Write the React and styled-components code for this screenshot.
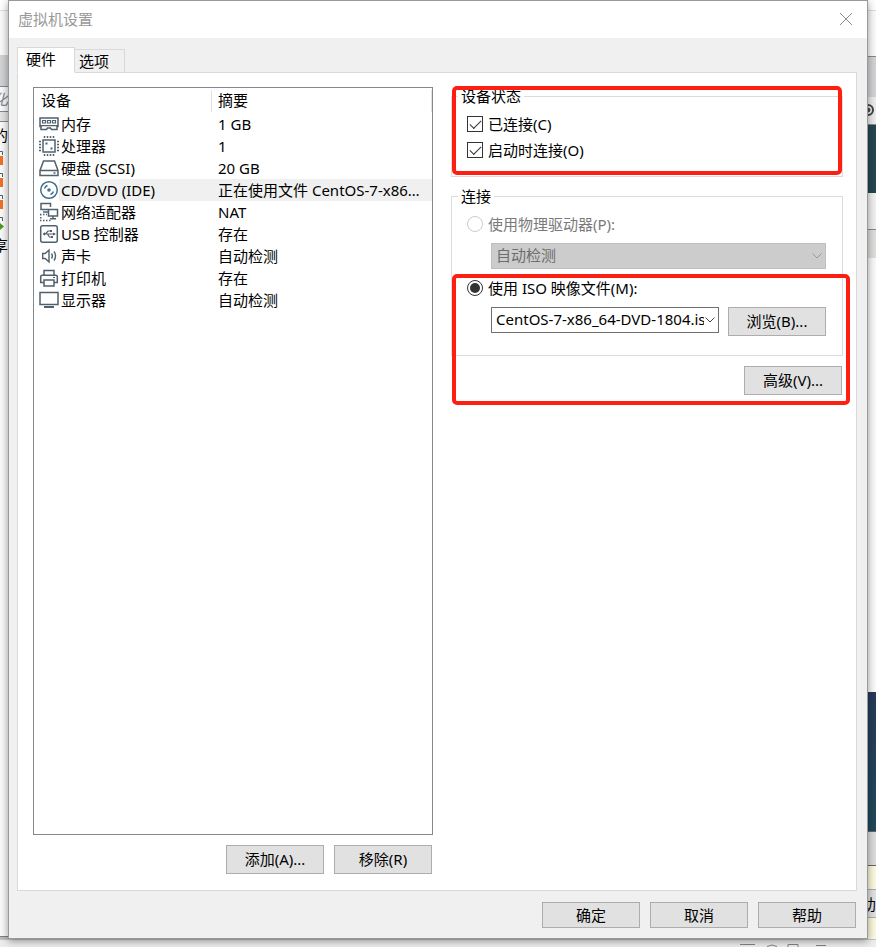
import React, { useState } from "react";
import styled, { createGlobalStyle } from "styled-components";

const GlobalStyle = createGlobalStyle`
  * {
    box-sizing: border-box;
  }

  body {
    margin: 0;
    background: #f0f0f0;
  }

  body,
  button,
  select,
  table {
    font-family: "Noto Sans", "Noto Sans CJK SC", sans-serif;
    font-size: 15px;
    font-weight: 400;
    color: #000;
  }
`;

/* desktop behind the dialog */

const Desktop = styled.div`
  display: grid;
  grid-template-columns: 8px minmax(0, 1fr) 8px;
  grid-template-rows: minmax(0, 1fr) 8px;
  height: 100vh;
  min-height: 560px;
  overflow: hidden;
`;

const Strip = styled.div`
  display: flex;
  flex-direction: column;
  min-height: 0;
  overflow: hidden;
`;

const Block = styled.div`
  display: flex;
  align-items: center;
  justify-content: ${({ $end }) => ($end ? "flex-end" : "flex-start")};
  flex: ${({ $h }) => ($h ? `0 0 ${$h}px` : "1 1 0")};
  overflow: hidden;
  white-space: nowrap;
  line-height: 20px;
  background: ${({ $bg }) => $bg || "#fafafa"};
  border-top: ${({ $line }) => ($line ? `1px solid ${$line}` : "none")};
  color: ${({ $color }) => $color || "#000"};
  font-style: ${({ $italic }) => ($italic ? "italic" : "normal")};
`;

const StatusStrip = styled.div`
  grid-column: 1 / -1;
  display: flex;
  justify-content: flex-end;
  align-items: flex-end;
  padding-right: 48px;
  background: #ededed;
  border-top: 1px solid #c4c4c4;
`;

/* dialog */

const Dialog = styled.main`
  display: flex;
  flex-direction: column;
  position: relative;
  min-height: 0;
  border: 1px solid #999;
  background: #f0f0f0;
  box-shadow: 0 2px 8px rgba(0, 0, 0, 0.4);
`;

const TitleBar = styled.header`
  display: flex;
  align-items: center;
  justify-content: space-between;
  flex: 0 0 37px;
  padding: 0 14px 2px 9px;
  background: #fff;
  color: #999;
`;

const Title = styled.h1`
  margin: 0;
  font-size: 15px;
  font-weight: 400;
`;

const CloseButton = styled.button`
  display: flex;
  padding: 0;
  border: 0;
  background: none;
`;

const Body = styled.div`
  display: flex;
  flex-direction: column;
  flex: 1;
  min-height: 0;
  padding: 9px 10px 0 8px;
`;

const Tabs = styled.div`
  display: flex;
  align-items: flex-end;
`;

const Tab = styled.button`
  position: relative;
  z-index: ${({ $active }) => ($active ? 1 : 0)};
  height: ${({ $active }) => ($active ? 26 : 24)}px;
  margin-bottom: -1px;
  padding: ${({ $active }) => ($active ? "0 18px 2px 8px" : "0 15px 0 4px")};
  border: 1px solid #d9d9d9;
  border-left-width: ${({ $active }) => ($active ? 1 : 0)}px;
  border-bottom-color: ${({ $active }) => ($active ? "#fff" : "#d9d9d9")};
  background: ${({ $active }) => ($active ? "#fff" : "#f0f0f0")};
  line-height: 20px;
`;

const Panel = styled.section`
  display: flex;
  gap: 18px;
  flex: 1;
  min-height: 0;
  padding: 14px 13px 16px 15px;
  border: 1px solid #d9d9d9;
  background: #fff;
`;

const Devices = styled.div`
  display: flex;
  flex-direction: column;
  gap: 10px;
  flex: 0 0 400px;
`;

const DeviceList = styled.div`
  flex: 1;
  min-height: 0;
  overflow: hidden;
  border: 1px solid #828790;
`;

const DeviceTable = styled.table`
  width: 100%;
  table-layout: fixed;
  border-collapse: collapse;
`;

const HeadCell = styled.th`
  height: 25px;
  padding: 0 0 2px ${({ $pad }) => $pad}px;
  background: linear-gradient(#e2e2e2, #e2e2e2) right 2px / 1px 22px no-repeat;
  font-weight: 400;
  text-align: left;
  line-height: 20px;
`;

const Cell = styled.td`
  height: 22px;
  padding: 0 ${({ $end }) => $end || 0}px 0 ${({ $pad }) => $pad}px;
  overflow: hidden;
  text-overflow: ellipsis;
  white-space: nowrap;
  line-height: 22px;
  background: ${({ $selected }) => ($selected ? "#f0f0f0" : "transparent")};
`;

const Icon = styled.svg.attrs({ width: 20, height: 20, viewBox: "0 0 20 20", "aria-hidden": true })`
  display: block;
  fill: none;
  stroke: ${({ $color }) => $color || "#50616d"};
  stroke-width: 1.5;
`;

const ButtonRow = styled.div`
  display: flex;
  justify-content: flex-end;
  gap: 10px;
  padding-right: 1px;
`;

const PushButton = styled.button`
  flex: 0 0 98px;
  height: ${({ $short }) => ($short ? 26 : 29)}px;
  padding: 0 0 ${({ $short }) => ($short ? 0 : 2)}px;
  border: 1px solid #adadad;
  background: #e1e1e1;
  line-height: 20px;

  &:hover {
    border-color: #0078d7;
    background: #e5f1fb;
  }
`;

const Footer = styled.footer`
  display: flex;
  justify-content: flex-end;
  gap: 10px;
  padding: 11px 11px 10px;
`;

/* right column */

const Settings = styled.div`
  position: relative;
  flex: 1;
  min-width: 0;
`;

const Group = styled.fieldset`
  min-width: 0;
  margin: 0 0 10px;
  padding: 6px 15px 13px;
  border: 1px solid #dcdcdc;
`;

const Legend = styled.legend`
  height: 18px;
  margin-left: -9px;
  padding: 0 3px;
  line-height: 18px;
`;

const Option = styled.label`
  display: flex;
  align-items: center;
  gap: 5px;
  height: 26px;
  line-height: 20px;
  color: ${({ $disabled }) => ($disabled ? "#7a7a7a" : "#000")};
`;

const OptionText = styled.span`
  padding-bottom: 1px;
`;

const Check = styled.input.attrs({ type: "checkbox" })`
  appearance: none;
  display: grid;
  place-items: center;
  width: 16px;
  height: 16px;
  margin: 0;
  border: 1px solid #333;
  background: #fff;

  &:checked::before {
    content: "";
    width: 10px;
    height: 5px;
    margin-top: -3px;
    border: solid #333;
    border-width: 0 0 1px 1px;
    transform: rotate(-45deg);
  }
`;

const Radio = styled.input.attrs({ type: "radio" })`
  appearance: none;
  display: grid;
  place-items: center;
  width: 16px;
  height: 16px;
  margin: 0;
  border: 1px solid #333;
  border-radius: 50%;
  background: #fff;

  &:disabled {
    border-color: #ccc;
  }

  &:checked::before {
    content: "";
    width: 10px;
    height: 10px;
    border-radius: 50%;
    background: #333;
  }
`;

const Row = styled.div`
  display: flex;
  align-items: flex-end;
  gap: 9px;
  margin: 6px 1px 6px 24px;
`;

const Field = styled.div`
  display: grid;
  align-items: center;
  flex: 1;
  min-width: 0;
  align-self: flex-start;

  > * {
    grid-area: 1 / 1;
  }
`;

const Combo = styled.select`
  appearance: none;
  width: 100%;
  min-width: 0;
  height: 26px;
  padding: 0 14px 2px 4px;
  border: 1px solid #707070;
  border-radius: 0;
  background: #fff;
  line-height: 20px;

  &:disabled {
    border-color: #bfbfbf;
    background: #ccc;
    color: #6d6d6d;
    opacity: 1;
  }
`;

const Chevron = styled.svg.attrs({ width: 10, height: 6, viewBox: "0 0 10 6", "aria-hidden": true })`
  justify-self: end;
  margin-right: 4px;
  fill: none;
  stroke: ${({ $muted }) => ($muted ? "#999" : "#444")};
  pointer-events: none;
`;

const Highlight = styled.div`
  position: absolute;
  top: ${({ $top }) => $top}px;
  left: 1px;
  right: ${({ $right }) => $right}px;
  height: ${({ $height }) => $height}px;
  border: 4px solid #ff1f12;
  border-radius: 5px;
  pointer-events: none;
`;

const MemoryIcon = () => (
  <Icon>
    <path d="M1 4h18v8.500h-1v3h-5.500l-1-1.500h-3l-1 1.500H2v-3H1z" />
    <path d="M3.500 6.500h3v2.500h-3zM8.500 6.500h3v2.500h-3zM13.500 6.500h3v2.500h-3zM1 11.700h18" strokeWidth="1.200" />
  </Icon>
);

const CpuIcon = () => (
  <Icon>
    <path d="M4 4h12v12H4z" />
    <path
      d="M5.500 0v2M8.500 0v2M11.500 0v2M14.500 0v2M5.500 18v2M8.500 18v2M11.500 18v2M14.500 18v2M0 5.500h2M0 8.500h2M0 11.500h2M0 14.500h2M18 5.500h2M18 8.500h2M18 11.500h2M18 14.500h2"
      strokeWidth="1.500"
    />
    <path d="M6.500 7.500h2M11.500 12.500h2" strokeWidth="2" />
  </Icon>
);

const DiskIcon = () => (
  <Icon>
    <path d="M4.500 3h11L19 12.500v5H1v-5zM1 12.500h18" />
    <path d="M14.500 15h2" />
  </Icon>
);

const DiscIcon = () => (
  <Icon $color="#41708f">
    <circle cx="10" cy="10" r="8.300" />
    <circle cx="10" cy="10" r="1.800" fill="#41708f" stroke="none" />
    <path d="M5.500 8.500a5 5 0 0 1 3-3M14.500 11.500a5 5 0 0 1-3 3" />
  </Icon>
);

const NetworkIcon = () => (
  <Icon>
    <path d="M9 7.500H2v-6h9.500V5M4 10h5" />
    <path d="M9.500 7.500h9V14h-9zM14 14v2.500M11 16.800h6" />
    <path d="M1 12.500h7M1 18.500h11M1.700 12v7" strokeDasharray="1.500 1.500" />
  </Icon>
);

const UsbIcon = () => (
  <Icon>
    <rect x="1.700" y="1.700" width="16.600" height="16.600" rx="2" />
    <path d="M4.500 10h11M6.500 10 9 7h2.500M8.500 10l2 3H13" strokeWidth="1.200" />
    <path d="M3.500 10l2.500-1.700v3.400zM14 8.500l3 1.500-3 1.500zM11 6h2v2h-2zM12 12h2v2h-2z" fill="#50616d" stroke="none" />
  </Icon>
);

const SoundIcon = () => (
  <Icon>
    <path d="M3.700 7.500h2.500L10 4v12l-3.800-3.500H3.700zM12.500 7.500c1 1.500 1 3.500 0 5M15 5.500c2 2.500 2 6.500 0 9" strokeWidth="1.400" />
  </Icon>
);

const PrinterIcon = () => (
  <Icon>
    <path d="M5 7V2.500h10V7M5 14.500H1.700V8.700q0-1.500 1.500-1.500h13.600q1.500 0 1.500 1.500v5.800H15M5 12h10v6H5z" />
    <path d="M14 9.500h2" strokeWidth="1.200" />
  </Icon>
);

const DisplayIcon = () => (
  <Icon>
    <path d="M1 2.500h18v12H1z" />
    <path d="M5 17h10" strokeWidth="2" />
  </Icon>
);

const devices = [
  { icon: MemoryIcon, name: "内存", summary: "1 GB" },
  { icon: CpuIcon, name: "处理器", summary: "1" },
  { icon: DiskIcon, name: "硬盘 (SCSI)", summary: "20 GB" },
  { icon: DiscIcon, name: "CD/DVD (IDE)", summary: "正在使用文件 CentOS-7-x86_64-DVD-1804.iso" },
  { icon: NetworkIcon, name: "网络适配器", summary: "NAT" },
  { icon: UsbIcon, name: "USB 控制器", summary: "存在" },
  { icon: SoundIcon, name: "声卡", summary: "自动检测" },
  { icon: PrinterIcon, name: "打印机", summary: "存在" },
  { icon: DisplayIcon, name: "显示器", summary: "自动检测" },
];

const VmIcon = ({ running }) => (
  <svg width="4" height="15" viewBox="0 0 4 15" aria-hidden="true">
    <path d="M0 .5h2.500V4" fill="none" stroke="#50616d" />
    {running ? <path d="M0 6l4 3.500L0 13z" fill="#4c9a1c" /> : <path d="M0 5h3v9H0z" fill="#f0702a" />}
  </svg>
);

const App = () => {
  const [selected, setSelected] = useState(3);

  return (
    <>
      <GlobalStyle />
      <Desktop>
        <Strip aria-hidden="true">
          <Block $h={10} $bg="#fff" />
          <Block $h={45} $line="#ddd" />
          <Block $h={31} $bg="#d2d3d5" />
          <Block $h={25} $line="#888" $color="#7d8b96" $end $italic>化</Block>
          <Block $h={10} $line="#888" $bg="#e4e4e4" />
          <Block $h={26} $line="#888" $end>的</Block>
          <Block $h={22}><VmIcon /></Block>
          <Block $h={22}><VmIcon /></Block>
          <Block $h={22}><VmIcon /></Block>
          <Block $h={22}><VmIcon running /></Block>
          <Block $h={20} $end>享</Block>
          <Block />
          <Block $h={3} $line="#7b8288" $bg="#bbb" />
        </Strip>

        <Dialog>
          <TitleBar>
            <Title>虚拟机设置</Title>
            <CloseButton aria-label="关闭">
              <svg width="14" height="14" viewBox="0 0 14 14" fill="none" stroke="#8c8c8c">
                <path d="M1 1l12 12M13 1L1 13" />
              </svg>
            </CloseButton>
          </TitleBar>

          <Body>
            <Tabs role="tablist">
              <Tab role="tab" aria-selected="true" $active>硬件</Tab>
              <Tab role="tab" aria-selected="false">选项</Tab>
            </Tabs>

            <Panel>
              <Devices>
                <DeviceList>
                  <DeviceTable>
                    <colgroup>
                      <col style={{ width: 25 }} />
                      <col style={{ width: 153 }} />
                      <col />
                    </colgroup>
                    <thead>
                      <tr>
                        <HeadCell colSpan={2} $pad={7}>设备</HeadCell>
                        <HeadCell $pad={6}>摘要</HeadCell>
                      </tr>
                    </thead>
                    <tbody>
                      {devices.map(({ icon: DeviceIcon, name, summary }, index) => (
                        <tr key={name} onClick={() => setSelected(index)}>
                          <Cell $pad={5}><DeviceIcon /></Cell>
                          <Cell $pad={2} $selected={index === selected}>{name}</Cell>
                          <Cell $pad={6} $end={10} $selected={index === selected}>{summary}</Cell>
                        </tr>
                      ))}
                    </tbody>
                  </DeviceTable>
                </DeviceList>
                <ButtonRow>
                  <PushButton>添加(A)...</PushButton>
                  <PushButton>移除(R)</PushButton>
                </ButtonRow>
              </Devices>

              <Settings>
                <Group>
                  <Legend>设备状态</Legend>
                  <Option><Check defaultChecked /><OptionText>已连接(C)</OptionText></Option>
                  <Option><Check defaultChecked /><OptionText>启动时连接(O)</OptionText></Option>
                </Group>

                <Group>
                  <Legend>连接</Legend>
                  <Option $disabled>
                    <Radio name="source" disabled />
                    <OptionText>使用物理驱动器(P):</OptionText>
                  </Option>
                  <Row>
                    <Field>
                      <Combo aria-label="物理驱动器" disabled>
                        <option>自动检测</option>
                      </Combo>
                      <Chevron $muted><path d="M.5.5 5 5 9.500.5" /></Chevron>
                    </Field>
                  </Row>
                  <Option>
                    <Radio name="source" defaultChecked />
                    <OptionText>使用 ISO 映像文件(M):</OptionText>
                  </Option>
                  <Row>
                    <Field>
                      <Combo aria-label="ISO 映像文件">
                        <option>CentOS-7-x86_64-DVD-1804.is</option>
                      </Combo>
                      <Chevron><path d="M.5.5 5 5 9.500.5" /></Chevron>
                    </Field>
                    <PushButton>浏览(B)...</PushButton>
                  </Row>
                </Group>

                <ButtonRow>
                  <PushButton>高级(V)...</PushButton>
                </ButtonRow>

                <Highlight $top={-1} $right={1} $height={89} />
                <Highlight $top={187} $right={-7} $height={131} />
              </Settings>
            </Panel>
          </Body>

          <Footer>
            <PushButton $short>确定</PushButton>
            <PushButton $short>取消</PushButton>
            <PushButton $short>帮助</PushButton>
          </Footer>
        </Dialog>

        <Strip aria-hidden="true">
          <Block $h={10} $bg="#fff" />
          <Block $h={46} $line="#ddd" />
          <Block $h={41} $line="#888" $bg="#d2d3d5" />
          <Block $h={27} $bg="#ececec">
            <svg width="8" height="16" viewBox="0 0 8 16" fill="none" stroke="#444">
              <circle cx="0" cy="7" r="5" strokeWidth="2" />
              <circle cx="0" cy="7" r="2" fill="#444" />
            </svg>
          </Block>
          <Block $h={69} $bg="#244650" $line="#888" />
          <Block $h={36} $bg="#f0f0f0" />
          <Block $h={29} $line="#888" $bg="#dededc" />
          <Block />
          <Block $h={139} $bg="linear-gradient(#263b58, #20485a)" />
          <Block $h={34} $line="#666" $bg="#dcdcdc" />
          <Block $h={24} $line="#666" $bg="#fbfade" />
          <Block $h={28} $line="#adadad" $bg="#e1e1e1" $end>助</Block>
          <Block $h={22} $line="#adadad" $bg="#fbfade" />
        </Strip>

        <StatusStrip aria-hidden="true">
          <svg width="100" height="3" viewBox="0 0 100 3" fill="none" stroke="#7b868d">
            <path d="M12 .5h15M39 2.500q5-3 10 0M60 3V.5h10V3M88 1.500h10" />
          </svg>
        </StatusStrip>
      </Desktop>
    </>
  );
};

export default App;
